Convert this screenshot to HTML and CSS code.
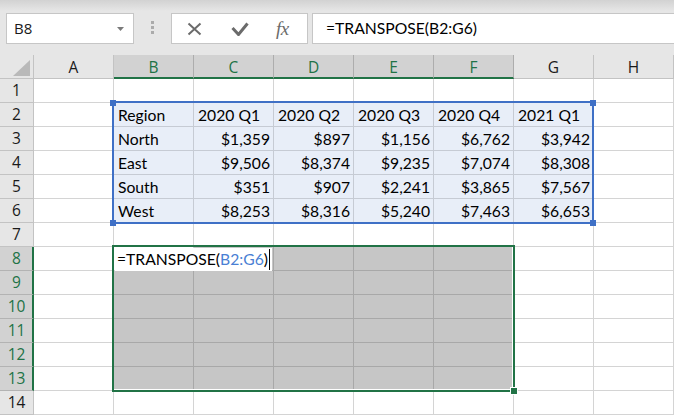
FILE: index.html
```html
<!DOCTYPE html>
<html lang="en">
<head>
    <meta charset="UTF-8">
    <title>TRANSPOSE</title>
    <link rel="stylesheet" href="styles.css">
</head>
<body>
    <div class="toolbar">
        <div class="namebox">
            <span>B8</span>
            <svg class="drop" width="7" height="4" viewBox="0 0 7 4"><path d="M0 0h7L3.5 4z" fill="#7a7a7a"/></svg>
        </div>
        <div class="grip"><i></i><i></i><i></i></div>
        <div class="fxbox">
            <svg class="ico-x" width="15" height="14" viewBox="0 0 15 14"><path d="M1.5 1.5l12 11M13.5 1.5l-12 11" stroke="#6b6b6b" stroke-width="2" fill="none"/></svg>
            <svg class="ico-ok" width="18" height="14" viewBox="0 0 18 14"><path d="M1.5 6l6 6.5L16.5 1.5" stroke="#6b6b6b" stroke-width="3" fill="none" stroke-linejoin="miter"/></svg>
            <span class="ico-fx">fx</span>
        </div>
        <div class="formula">=TRANSPOSE(B2:G6)</div>
    </div>

    <div class="sheet">
        <div class="row head">
            <div class="corner"><svg width="17" height="16" viewBox="0 0 17 16"><path d="M17 0V16H0z" fill="#b9b9b9"/></svg></div>
            <div class="ch">A</div>
            <div class="ch on">B</div>
            <div class="ch on">C</div>
            <div class="ch on">D</div>
            <div class="ch on">E</div>
            <div class="ch on">F</div>
            <div class="ch">G</div>
            <div class="ch">H</div>
        </div>

        <div class="row">
            <div class="rh">1</div>
            <div class="c"></div><div class="c"></div><div class="c"></div><div class="c"></div>
            <div class="c"></div><div class="c"></div><div class="c"></div><div class="c"></div>
        </div>
        <div class="row">
            <div class="rh">2</div>
            <div class="c"></div>
            <div class="c ref">Region</div>
            <div class="c ref">2020 Q1</div>
            <div class="c ref">2020 Q2</div>
            <div class="c ref">2020 Q3</div>
            <div class="c ref">2020 Q4</div>
            <div class="c ref">2021 Q1</div>
            <div class="c"></div>
        </div>
        <div class="row">
            <div class="rh">3</div>
            <div class="c"></div>
            <div class="c ref">North</div>
            <div class="c ref num">$1,359</div>
            <div class="c ref num">$897</div>
            <div class="c ref num">$1,156</div>
            <div class="c ref num">$6,762</div>
            <div class="c ref num">$3,942</div>
            <div class="c"></div>
        </div>
        <div class="row">
            <div class="rh">4</div>
            <div class="c"></div>
            <div class="c ref">East</div>
            <div class="c ref num">$9,506</div>
            <div class="c ref num">$8,374</div>
            <div class="c ref num">$9,235</div>
            <div class="c ref num">$7,074</div>
            <div class="c ref num">$8,308</div>
            <div class="c"></div>
        </div>
        <div class="row">
            <div class="rh">5</div>
            <div class="c"></div>
            <div class="c ref">South</div>
            <div class="c ref num">$351</div>
            <div class="c ref num">$907</div>
            <div class="c ref num">$2,241</div>
            <div class="c ref num">$3,865</div>
            <div class="c ref num">$7,567</div>
            <div class="c"></div>
        </div>
        <div class="row">
            <div class="rh">6</div>
            <div class="c"></div>
            <div class="c ref">West</div>
            <div class="c ref num">$8,253</div>
            <div class="c ref num">$8,316</div>
            <div class="c ref num">$5,240</div>
            <div class="c ref num">$7,463</div>
            <div class="c ref num">$6,653</div>
            <div class="c"></div>
        </div>
        <div class="row">
            <div class="rh">7</div>
            <div class="c"></div><div class="c"></div><div class="c"></div><div class="c"></div>
            <div class="c"></div><div class="c"></div><div class="c"></div><div class="c"></div>
        </div>
        <div class="row">
            <div class="rh on">8</div>
            <div class="c"></div>
            <div class="c active">
                <div class="editor">=TRANSPOSE(<span class="rng">B2:G6</span>)<i class="caret"></i></div>
            </div>
            <div class="c sel"></div><div class="c sel"></div><div class="c sel"></div><div class="c sel"></div>
            <div class="c"></div><div class="c"></div>
        </div>
        <div class="row">
            <div class="rh on">9</div>
            <div class="c"></div>
            <div class="c sel"></div><div class="c sel"></div><div class="c sel"></div><div class="c sel"></div><div class="c sel"></div>
            <div class="c"></div><div class="c"></div>
        </div>
        <div class="row">
            <div class="rh on">10</div>
            <div class="c"></div>
            <div class="c sel"></div><div class="c sel"></div><div class="c sel"></div><div class="c sel"></div><div class="c sel"></div>
            <div class="c"></div><div class="c"></div>
        </div>
        <div class="row">
            <div class="rh on">11</div>
            <div class="c"></div>
            <div class="c sel"></div><div class="c sel"></div><div class="c sel"></div><div class="c sel"></div><div class="c sel"></div>
            <div class="c"></div><div class="c"></div>
        </div>
        <div class="row">
            <div class="rh on">12</div>
            <div class="c"></div>
            <div class="c sel"></div><div class="c sel"></div><div class="c sel"></div><div class="c sel"></div><div class="c sel"></div>
            <div class="c"></div><div class="c"></div>
        </div>
        <div class="row">
            <div class="rh on">13</div>
            <div class="c"></div>
            <div class="c sel"></div><div class="c sel"></div><div class="c sel"></div><div class="c sel"></div><div class="c sel"></div>
            <div class="c"></div><div class="c"></div>
        </div>
        <div class="row">
            <div class="rh">14</div>
            <div class="c"></div><div class="c"></div><div class="c"></div><div class="c"></div>
            <div class="c"></div><div class="c"></div><div class="c"></div><div class="c"></div>
        </div>

        <!-- range reference box (B2:G6) -->
        <div class="refbox">
            <i class="h tl"></i><i class="h tr"></i><i class="h bl"></i><i class="h br"></i>
        </div>
        <!-- selection box (B8:F13) -->
        <div class="selbox"><i class="fill"></i></div>
    </div>
</body>
</html>
```

FILE: styles.css
```css
:root {
    --bg: #e6e6e6;
    --grid: #d4d4d4;
    --head-line: #c3c3c3;
    --head-on: #d2d2d2;
    --green: #217346;
    --blue: #3f70c6;
    --cell-font: 'Lato', 'Liberation Sans', sans-serif;
    --ui-font: 'Open Sans', 'Noto Sans', sans-serif;
}

body {
    margin: 0;
    width: 674px;
    height: 415px;
    overflow: hidden;
    background: #fff;
    font-family: var(--cell-font);
}

/* 公式栏 */
.toolbar {
    height: 55px;
    box-sizing: border-box;
    padding-top: 13px;
    display: flex;
    align-items: flex-start;
    background: linear-gradient(#d2d2d2 0, var(--bg) 11px);
}

.namebox,
.fxbox,
.formula {
    height: 31px;
    box-sizing: border-box;
    border: 1px solid #c6c6c6;
    background: #fff;
}

.namebox {
    margin-left: 6px;
    width: 128px;
    padding-left: 7px;
    display: flex;
    align-items: center;
    font: 400 15px/1 var(--ui-font);
    color: #1a1a1a;
}

.namebox .drop {
    margin-left: auto;
    margin-right: 9px;
}

.grip {
    margin: 8px 0 0 17px;
    width: 3px;
    display: flex;
    flex-direction: column;
    gap: 2px;
}

.grip i {
    width: 3px;
    height: 3px;
    background: #ababab;
}

.fxbox {
    margin-left: 17px;
    width: 137px;
    display: flex;
    align-items: center;
    padding-left: 15px;
}

.ico-x { margin-top: 1px; }
.ico-ok { margin-left: 29px; margin-top: 1px; }

.ico-fx {
    margin-left: 27px;
    font: italic 400 19px/1 'Liberation Serif', 'DejaVu Serif', serif;
    color: #6b6b6b;
    letter-spacing: -0.5px;
}

.formula {
    margin-left: 4px;
    margin-right: -3px;
    flex: 1;
    padding-left: 13px;
    font: 400 15.7px/29px var(--cell-font);
    color: #000;
}

/* 表格 */
.sheet {
    position: relative;
}

.row {
    display: grid;
    grid-template-columns: 34px repeat(8, 80px);
    height: 24px;
}

.row > div {
    box-sizing: border-box;
    height: 24px;
    border-right: 1px solid var(--grid);
    border-bottom: 1px solid var(--grid);
}

.head > div {
    background: var(--bg);
    border-right-color: var(--head-line);
    border-bottom-color: var(--head-line);
}

.corner {
    display: flex;
    align-items: flex-end;
    justify-content: flex-end;
    padding: 0 3px 2px 0;
}

.ch {
    text-align: center;
    font: 400 15.5px/23px var(--ui-font);
    padding-top: 1px;
    color: #1a1a1a;
}

.ch.on {
    background: var(--head-on) !important;
    border-right-color: #adadad !important;
    border-bottom: 2px solid var(--green) !important;
    color: var(--green);
}

.row > .rh {
    background: var(--bg);
    border-right-color: var(--head-line);
    border-bottom-color: var(--head-line);
    text-align: center;
    font: 400 15.5px/23px var(--ui-font);
    color: #1a1a1a;
}

.row > .rh.on {
    background: var(--head-on);
    border-right: 2px solid var(--green);
    border-bottom-color: #b3b3b3;
    color: var(--green);
    padding-left: 1px;
}

.c {
    font-size: 15.7px;
    line-height: 23px;
    padding: 1px 3px 0 4px;
    white-space: nowrap;
    color: #000;
}

.c.num {
    text-align: right;
}

.row > .c.ref {
    background: #e8eef8;
    border-color: #c6cbd4;
}

.row > .c.sel {
    background: #c6c6c6;
    border-color: #a8a8a8;
}

.c.active {
    position: relative;
    padding: 0;
}

/* 单元格内编辑框 */
.editor {
    position: absolute;
    left: 1px;
    top: 1px;
    width: 157px;
    height: 23px;
    background: #fff;
    padding-left: 2px;
    box-sizing: border-box;
    line-height: 23px;
    z-index: 2;
}

.rng {
    color: #4a7fd4;
}

.caret {
    display: inline-block;
    width: 1px;
    height: 21px;
    background: #000;
    margin-left: 1px;
    vertical-align: -5px;
}

.refbox {
    position: absolute;
    left: 112px;
    top: 46px;
    width: 482px;
    height: 123px;
    border: 2px solid var(--blue);
    box-sizing: border-box;
}

.refbox .h {
    position: absolute;
    width: 6px;
    height: 6px;
    background: var(--blue);
}

.h.tl { left: -4px; top: -3px; }
.h.tr { right: -4px; top: -3px; }
.h.bl { left: -4px; bottom: -4px; }
.h.br { right: -4px; bottom: -4px; }

.selbox {
    position: absolute;
    left: 112px;
    top: 190px;
    width: 403px;
    height: 147px;
    border: 2px solid var(--green);
    box-sizing: border-box;
    box-shadow: inset -1px -1px 0 #fff;
}

.selbox .fill {
    position: absolute;
    right: -5px;
    bottom: -5px;
    width: 6px;
    height: 6px;
    background: var(--green);
    border: 1px solid #fff;
}
```
